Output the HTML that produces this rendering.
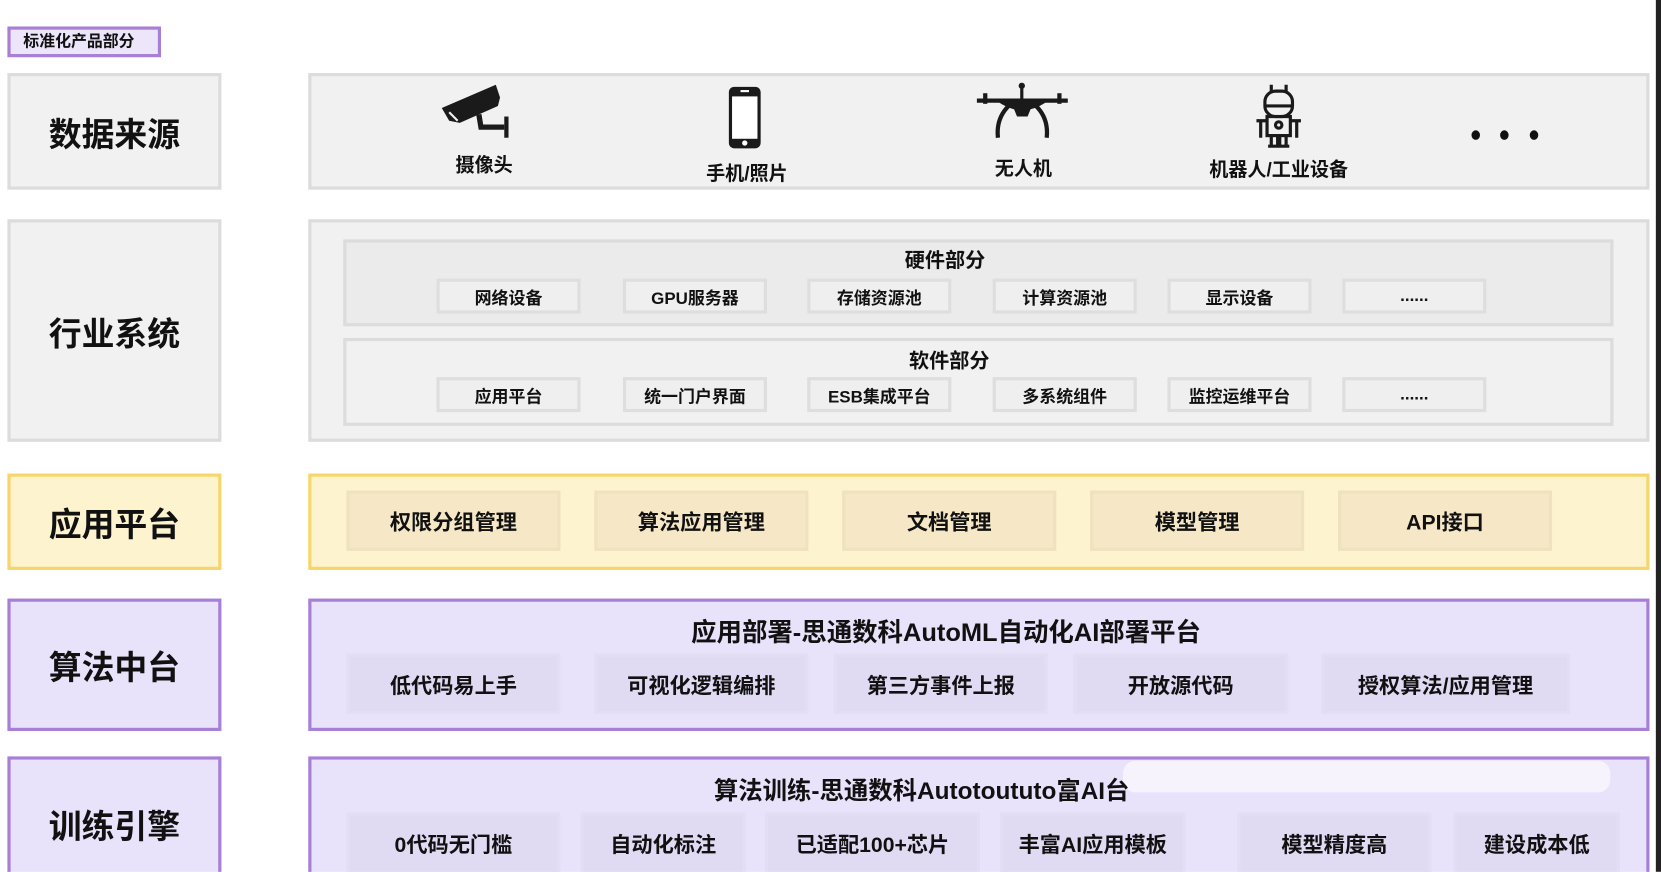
<!DOCTYPE html>
<html><head><meta charset="utf-8"><style>
html,body{margin:0;padding:0;background:#fff;overflow:hidden;width:1661px;height:872px}
#w{position:absolute;left:0;top:0;width:1568px;height:823px;transform:scale(1.0594);transform-origin:0 0;font-family:"Liberation Sans","Noto Sans CJK SC",sans-serif;color:#111;overflow:hidden}
.a{position:absolute;box-sizing:border-box}
.g{background:#f1f1f1;border:3px solid #dcdcdc}
.y{background:#fdf3cf;border:3px solid #f6d66a}
.p{background:#e9e2fb;border:3px solid #a77fd6}
.lab{display:flex;align-items:center;justify-content:center;font-size:31px;font-weight:bold}
.t{position:absolute;font-weight:bold;white-space:nowrap;transform:translateX(-50%)}
.i{position:absolute;box-sizing:border-box;display:flex;align-items:center;justify-content:center;font-weight:bold;white-space:nowrap}
.hw{background:#efefef;border:3px solid #dedede;font-size:16px;height:33px;width:136px}
.yi{background:#f6e8c7;border:3px solid #efe2bf;font-size:20px;height:57px;top:463px;width:202px}
.pi{background:#e0daf3;border:3px solid #e4def5;font-size:20px;height:57px}
</style></head><body><div id="w">
<div class="a" style="left:7px;top:25px;width:145px;height:29px;background:#ede5fa;border:3px solid #a77fd6;font-size:15px;font-weight:bold;padding-left:12px;line-height:23px">标准化产品部分</div>
<div class="a g lab" style="left:7px;top:69px;width:202px;height:110px">数据来源</div>
<div class="a g lab" style="left:7px;top:207px;width:202px;height:210px">行业系统</div>
<div class="a y lab" style="left:7px;top:447px;width:202px;height:91px">应用平台</div>
<div class="a p lab" style="left:7px;top:565px;width:202px;height:125px">算法中台</div>
<div class="a p lab" style="left:7px;top:714px;width:202px;height:140px;padding-bottom:14px">训练引擎</div>

<div class="a g" style="left:291px;top:69px;width:1266px;height:110px"></div>
<svg class="a" style="left:414px;top:80px" width="70" height="52" viewBox="0 0 70 52"><path d="M3 22 L54 0 L58 12 L56 20 L20 36 L10 34 Z" fill="#1a1a1a"/><path d="M10 26 L18 34" stroke="#f1f1f1" stroke-width="2"/><path d="M38 28 L40 40 L62 40" stroke="#1a1a1a" stroke-width="5" fill="none"/><rect x="62" y="30" width="4" height="20" fill="#1a1a1a"/></svg>
<div class="t" style="left:457px;top:142px;font-size:18px">摄像头</div>
<svg class="a" style="left:686px;top:80px" width="34" height="62" viewBox="0 0 34 62"><rect x="2" y="2" width="30" height="58" rx="5" fill="#1a1a1a"/><rect x="5" y="11" width="24" height="40" fill="#fff"/><rect x="13" y="5" width="8" height="2" fill="#fff"/><circle cx="17" cy="55" r="2.5" fill="#fff"/></svg>
<div class="t" style="left:705px;top:150px;font-size:18px">手机/照片</div>
<svg class="a" style="left:922px;top:78px" width="86" height="54" viewBox="0 0 86 54"><path d="M0 17 H86" stroke="#1a1a1a" stroke-width="4"/><rect x="6" y="10" width="4" height="10" fill="#1a1a1a"/><rect x="76" y="10" width="4" height="10" fill="#1a1a1a"/><path d="M20 18 Q43 34 66 18 Z" fill="#1a1a1a"/><rect x="41" y="2" width="3" height="16" fill="#1a1a1a"/><circle cx="42.5" cy="3" r="3" fill="#1a1a1a"/><path d="M30 22 Q18 34 20 52 M56 22 Q68 34 66 52" stroke="#1a1a1a" stroke-width="4" fill="none"/><path d="M34 22 L38 32 L48 32 L52 22Z" fill="#1a1a1a"/></svg>
<div class="t" style="left:966px;top:145px;font-size:18px">无人机</div>
<svg class="a" style="left:1182px;top:78px" width="50" height="62" viewBox="0 0 50 62"><g stroke="#1a1a1a" stroke-width="3" fill="none"><path d="M18 2 V8 M32 2 V8"/><rect x="12" y="8" width="26" height="24" rx="10"/><path d="M12 22 H38"/><rect x="14" y="32" width="22" height="18"/><circle cx="25" cy="40" r="3"/><path d="M8 36 V52 M42 36 V52 M4 36 H14 M36 36 H46 M18 50 V60 H24 V50 M26 50 V60 H32 V50 M15 60 H35"/></g></svg>
<div class="t" style="left:1207px;top:146px;font-size:18px">机器人/工业设备</div>
<div class="a" style="left:1389px;top:123px;width:8px;height:9px;border-radius:50%;background:#111"></div>
<div class="a" style="left:1416px;top:123px;width:8px;height:9px;border-radius:50%;background:#111"></div>
<div class="a" style="left:1444px;top:123px;width:8px;height:9px;border-radius:50%;background:#111"></div>

<div class="a g" style="left:291px;top:207px;width:1266px;height:210px"></div>
<div class="a" style="left:324px;top:226px;width:1199px;height:82px;background:#ebebeb;border:3px solid #dcdcdc"></div>
<div class="t" style="left:892px;top:231px;font-size:19px">硬件部分</div>
<div class="i hw" style="left:412px;top:263px">网络设备</div>
<div class="i hw" style="left:588px;top:263px">GPU服务器</div>
<div class="i hw" style="left:762px;top:263px">存储资源池</div>
<div class="i hw" style="left:937px;top:263px">计算资源池</div>
<div class="i hw" style="left:1102px;top:263px">显示设备</div>
<div class="i hw" style="left:1267px;top:263px">......</div>
<div class="a" style="left:324px;top:319px;width:1199px;height:83px;background:#f1f1f1;border:3px solid #dcdcdc"></div>
<div class="t" style="left:896px;top:326px;font-size:19px">软件部分</div>
<div class="i hw" style="left:412px;top:356px">应用平台</div>
<div class="i hw" style="left:588px;top:356px">统一门户界面</div>
<div class="i hw" style="left:762px;top:356px">ESB集成平台</div>
<div class="i hw" style="left:937px;top:356px">多系统组件</div>
<div class="i hw" style="left:1102px;top:356px">监控运维平台</div>
<div class="i hw" style="left:1267px;top:356px">......</div>

<div class="a y" style="left:291px;top:447px;width:1266px;height:91px"></div>
<div class="i yi" style="left:327px">权限分组管理</div>
<div class="i yi" style="left:561px">算法应用管理</div>
<div class="i yi" style="left:795px">文档管理</div>
<div class="i yi" style="left:1029px">模型管理</div>
<div class="i yi" style="left:1263px">API接口</div>

<div class="a p" style="left:291px;top:565px;width:1266px;height:125px"></div>
<div class="t" style="left:893px;top:577px;font-size:24px">应用部署-思通数科AutoML自动化AI部署平台</div>
<div class="i pi" style="left:327px;top:617px;width:202px">低代码易上手</div>
<div class="i pi" style="left:561px;top:617px;width:202px">可视化逻辑编排</div>
<div class="i pi" style="left:787px;top:617px;width:202px">第三方事件上报</div>
<div class="i pi" style="left:1013px;top:617px;width:203px">开放源代码</div>
<div class="i pi" style="left:1247px;top:617px;width:235px">授权算法/应用管理</div>

<div class="a p" style="left:291px;top:714px;width:1266px;height:140px"></div>
<div class="a" style="left:1060px;top:718px;width:460px;height:30px;background:#f6f3fd;border-radius:12px"></div>
<div class="t" style="left:870px;top:727px;font-size:23px">算法训练-思通数科Autotoututo富AI台</div>
<div class="i pi" style="left:327px;top:767px;width:202px;height:70px;padding-bottom:13px">0代码无门槛</div>
<div class="i pi" style="left:548px;top:767px;width:156px;height:70px;padding-bottom:13px">自动化标注</div>
<div class="i pi" style="left:722px;top:767px;width:203px;height:70px;padding-bottom:13px">已适配100+芯片</div>
<div class="i pi" style="left:944px;top:767px;width:175px;height:70px;padding-bottom:13px">丰富AI应用模板</div>
<div class="i pi" style="left:1168px;top:767px;width:183px;height:70px;padding-bottom:13px">模型精度高</div>
<div class="i pi" style="left:1372px;top:767px;width:157px;height:70px;padding-bottom:13px">建设成本低</div>

<div class="a" style="left:1563px;top:0;width:5px;height:823px;background:#222"></div>
</div></body></html>
